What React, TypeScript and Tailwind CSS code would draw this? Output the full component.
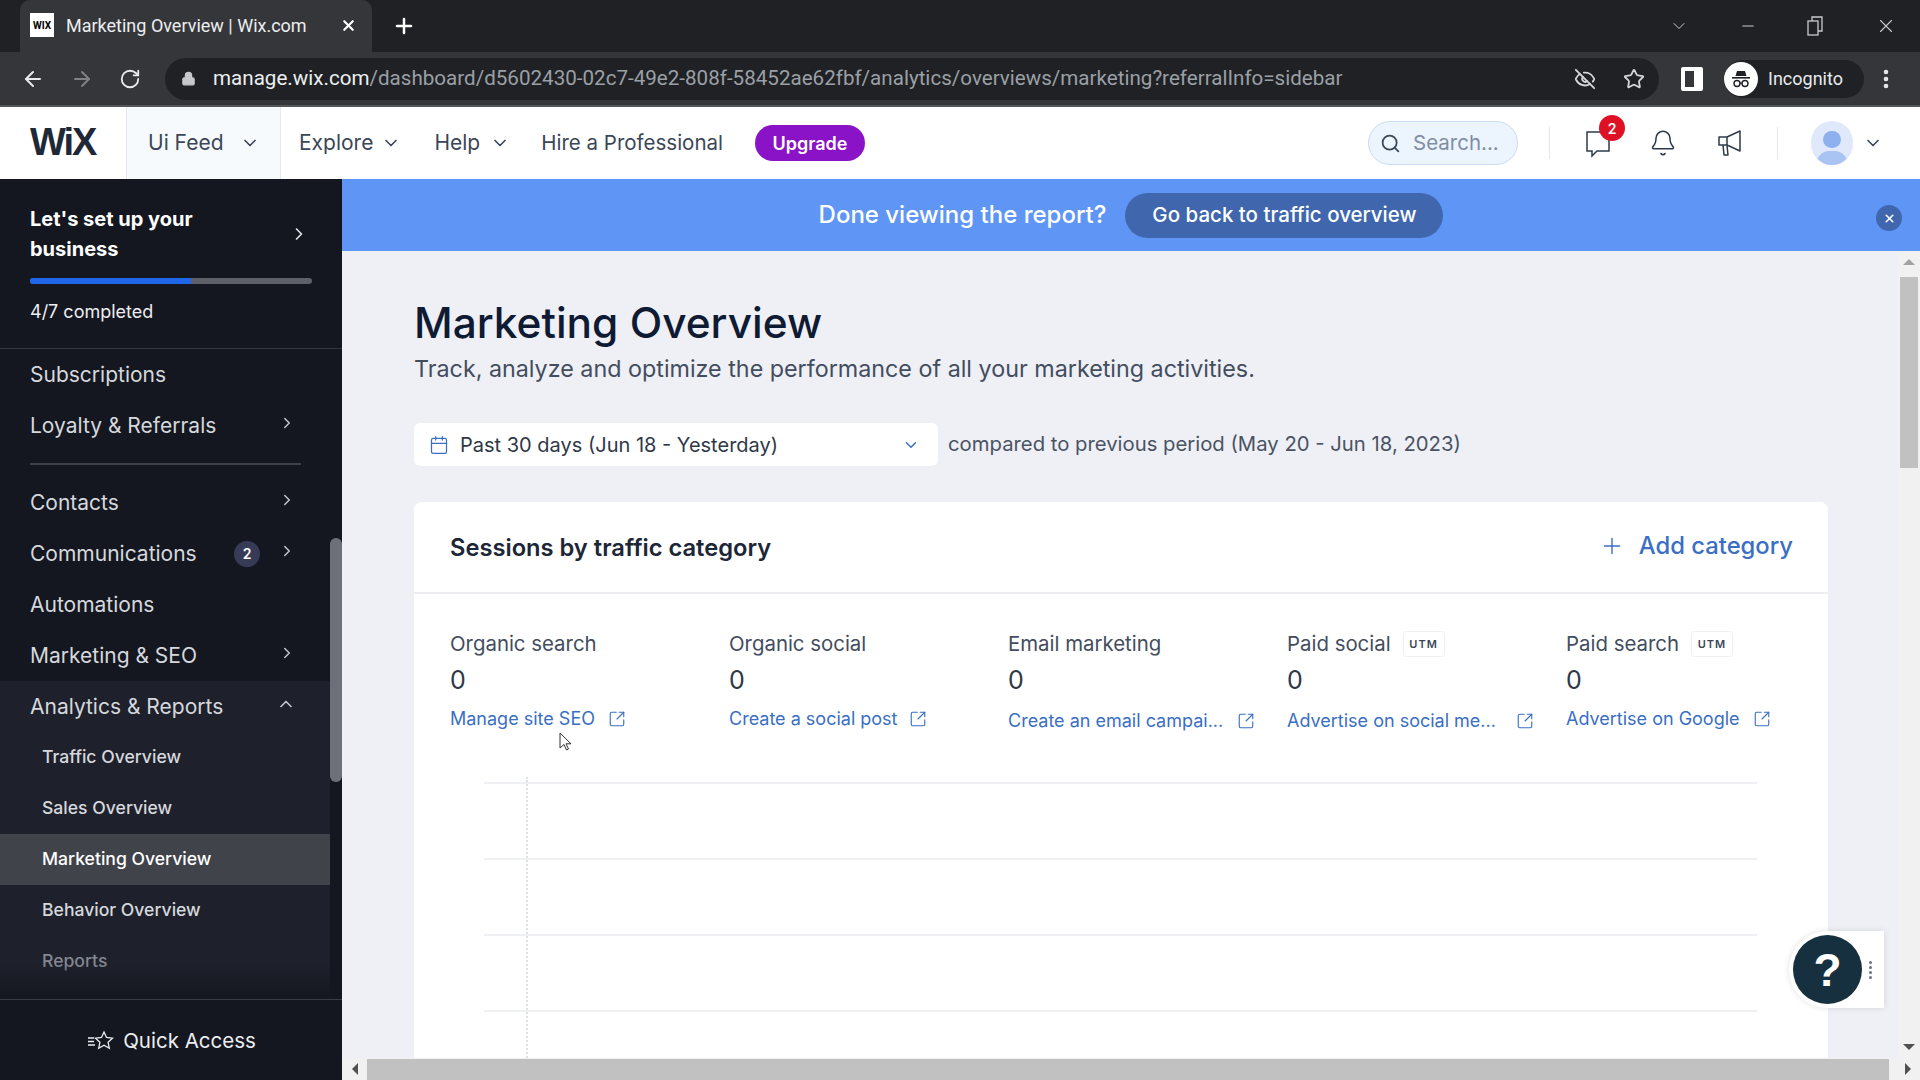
import {
  ArrowLeft,
  ArrowRight,
  Bell,
  Calendar,
  ChevronDown,
  ChevronRight,
  ChevronUp,
  EyeOff,
  Lock,
  Minus,
  MoreVertical,
  Plus,
  RotateCw,
  Search,
  SquareArrowOutUpRight,
  Star,
  X,
} from "lucide-react";

const sans = "font-['Inter','Noto_Sans',sans-serif]";

const traffic = [
  { label: "Organic search", link: "Manage site SEO", lift: "pt-[1px]", gap: "ml-[13px]" },
  { label: "Organic social", link: "Create a social post", lift: "pt-[1px]", gap: "ml-[11px]" },
  { label: "Email marketing", link: "Create an email campai...", lift: "pt-[3px]", gap: "ml-[14px]" },
  { label: "Paid social", link: "Advertise on social me...", utm: true, lift: "pt-[3px]", gap: "ml-[20px]" },
  { label: "Paid search", link: "Advertise on Google", utm: true, lift: "pt-[1px]", gap: "ml-[13px]" },
];

function NavRow({
  label,
  arrow,
  badge,
  sub,
  active,
  dim,
}: {
  label: string;
  arrow?: "right" | "up";
  badge?: string;
  sub?: boolean;
  active?: boolean;
  dim?: boolean;
}) {
  return (
    <div
      className={`flex h-[51px] shrink-0 items-center pr-[34px] ${sub ? "pl-[42px] text-[17.6px] font-medium" : "pl-[30px] text-[21px]"} ${active ? "bg-[#40434a] text-white" : dim ? "text-[#858892]" : "text-[#d6d8de]"}`}
    >
      <span className="flex-1 whitespace-nowrap">{label}</span>
      {badge && (
        <span className="mr-[18px] flex h-[26px] w-[26px] items-center justify-center rounded-full bg-[#383b56] text-[14px] font-semibold text-white">
          {badge}
        </span>
      )}
      {arrow === "right" && <ChevronRight size={18} className="-mt-[5px] text-[#c4c6cc]" />}
      {arrow === "up" && <ChevronUp size={20} className="-mt-[5px] text-[#c4c6cc]" />}
    </div>
  );
}

function BrowserChrome() {
  return (
    <>
      <div className="flex h-[52px] shrink-0 items-end bg-[#202124] pl-[20px] font-['Roboto',sans-serif]">
        <div className="flex h-[52px] w-[352px] items-center rounded-t-[10px] bg-[#35363a] pb-[2px] pl-[10px] pr-[15px] text-[18px] text-[#eceef0]">
          <div className="flex h-[24px] w-[24px] items-center justify-center bg-white text-[10px] font-bold text-black">
            WIX
          </div>
          <span className="ml-[12px] flex-1 whitespace-nowrap">Marketing Overview | Wix.com</span>
          <X size={17} strokeWidth={3} className="text-white" />
        </div>
        <div className="flex h-[52px] w-[64px] items-center justify-center">
          <Plus size={24} strokeWidth={2.5} className="text-white" />
        </div>
        <div className="flex h-[52px] flex-1 items-center justify-end text-[#c8cacd]">
          <ChevronDown size={20} strokeWidth={1.2} className="mr-[50px]" />
          <Minus size={18} strokeWidth={1.5} className="mr-[50px]" />
          <svg width="16" height="20" viewBox="0 0 16 20" fill="none" stroke="currentColor" strokeWidth="1.3" className="mr-[52px]">
            <rect x="1" y="5" width="10" height="14" />
            <path d="M5 5V1h10v14h-4" />
          </svg>
          <X size={22} strokeWidth={1.2} className="mr-[23px]" />
        </div>
      </div>
      <div className="flex h-[55px] shrink-0 items-center border-b-2 border-[#55565a] bg-[#35363a] font-['Roboto',sans-serif]">
        <div className="flex w-[165px] items-center justify-between pl-[21px] pr-[24px] text-[#e8eaed]">
          <ArrowLeft size={24} />
          <ArrowRight size={24} className="text-[#7f8185]" />
          <RotateCw size={22} />
        </div>
        <div className="flex h-[42px] w-[1494px] items-center rounded-full bg-[#202124] pl-[16px] pr-[13px] text-[20.6px]">
          <Lock size={15} fill="#c6c8cb" className="mr-[17px] text-[#c6c8cb]" />
          <span className="flex-1 whitespace-nowrap text-[#9aa0a6]">
            <span className="text-[#eceef0]">manage.wix.com</span>
            /dashboard/d5602430-02c7-49e2-808f-58452ae62fbf/analytics/overviews/marketing?referralInfo=sidebar
          </span>
          <EyeOff size={22} className="mr-[27px] text-[#d4d6d9]" />
          <Star size={22} className="mr-[1px] text-[#d4d6d9]" />
        </div>
        <div className="ml-[22px] h-[24px] w-[22px] rounded-[2px] border-[4px] border-r-[9px] border-white" />
        <div className="ml-[21px] flex h-[38px] w-[140px] items-center rounded-full bg-[#202124] text-[18px] text-[#e8eaed]">
          <div className="mr-[10px] flex h-[34px] w-[34px] items-center justify-center rounded-full bg-white">
            <svg width="24" height="24" viewBox="0 0 24 24" fill="#202124">
              <path d="M8 4h8l1.500 5h-11z" />
              <rect x="3" y="10" width="18" height="1.600" />
              <circle cx="8" cy="16.500" r="3" fill="none" stroke="#202124" strokeWidth="1.400" />
              <circle cx="16" cy="16.500" r="3" fill="none" stroke="#202124" strokeWidth="1.400" />
              <rect x="10.500" y="15.500" width="3" height="1.200" />
            </svg>
          </div>
          Incognito
        </div>
        <MoreVertical size={24} strokeWidth={2.6} className="ml-[10px] text-[#e8eaed]" />
      </div>
    </>
  );
}

function AppHeader() {
  return (
    <div className={`flex h-[72px] shrink-0 items-center bg-white text-[21px] text-[#3b4657] ${sans}`}>
      <div className="flex h-full w-[126px] items-center pb-[2px] pl-[30px] font-['Liberation_Sans',sans-serif] text-[38px] font-bold leading-none tracking-[-2px] text-[#1f2836]">
        WiX
      </div>
      <div className="flex h-full w-[155px] items-center border-x border-[#e6eaf0] bg-[#f7fafd] pl-[21px] pr-[20px]">
        <span className="flex-1">Ui Feed</span>
        <ChevronDown size={20} />
      </div>
      <span className="ml-[18px]">Explore</span>
      <ChevronDown size={20} className="ml-[8px]" />
      <span className="ml-[33px]">Help</span>
      <ChevronDown size={20} className="ml-[10px]" />
      <span className="ml-[31px] whitespace-nowrap text-[20.500px]">Hire a Professional</span>
      <div className="ml-[32px] flex h-[36px] w-[110px] items-center justify-center rounded-full bg-[#8a13c7] text-[18px] font-semibold text-white">
        Upgrade
      </div>
      <div className="ml-[503px] flex h-[44px] w-[150px] items-center rounded-full border border-[#c9dcf3] bg-[#ecf5fe] pl-[11px] text-[20.500px] text-[#7f8ea3]">
        <Search size={21} className="mr-[12px] text-[#3b4657]" />
        Search...
      </div>
      <div className="ml-[31px] h-[32px] w-px bg-[#e3e7ec]" />
      <div className="relative ml-[35px]">
        <svg width="26" height="30" viewBox="0 0 26 30" fill="none" stroke="#2e3a4b" strokeWidth="1.500" className="block">
          <path d="M2 4h22v19H12l-5 5v-5H2z" />
        </svg>
        <span className="absolute -right-[14px] -top-[13px] flex h-[26px] w-[26px] items-center justify-center rounded-full bg-[#df1125] text-[14px] font-semibold text-white">
          2
        </span>
      </div>
      <Bell size={28} strokeWidth={1.300} className="ml-[38px] text-[#2e3a4b]" />
      <svg width="28" height="30" viewBox="0 0 28 30" fill="none" stroke="#2e3a4b" strokeWidth="1.500" strokeLinejoin="round" className="ml-[39px]">
        <path d="M3 9h8l13-6v20l-13-6H3z" />
        <path d="M11 9v8M7 17l1 10h4l-1-9.500" />
      </svg>
      <div className="ml-[33px] h-[32px] w-px bg-[#e3e7ec]" />
      <div className="relative ml-[33px] h-[44px] w-[42px] overflow-hidden rounded-full bg-[#dfe9fb]">
        <div className="absolute left-[12px] top-[10px] h-[17px] w-[18px] rounded-full bg-[#8fb0ee]" />
        <div className="absolute left-[6px] top-[30px] h-[24px] w-[30px] rounded-full bg-[#a9c3f3]" />
      </div>
      <ChevronDown size={20} className="ml-[10px]" />
    </div>
  );
}

function Sidebar() {
  return (
    <aside className={`flex w-[342px] shrink-0 flex-col bg-[#14171f] ${sans}`}>
      <div className="h-[170px] shrink-0 border-b border-[#33363c] px-[30px] pt-[25px]">
        <div className="flex items-center justify-between">
          <div className="text-[20px] font-bold leading-[30px] text-white">
            Let's set up your
            <br />
            business
          </div>
          <ChevronRight size={20} className="mr-[3px] text-[#e2e3e6]" />
        </div>
        <div className="mt-[14px] h-[6px] w-[282px] overflow-hidden rounded-full bg-[#5e6069]">
          <div className="h-full w-[161px] bg-[#1f66ea]" />
        </div>
        <div className="mt-[14px] text-[18px] text-[#eceef2]">4/7 completed</div>
      </div>
      <div className="flex min-h-0 flex-1">
        <nav className="relative flex w-[330px] shrink-0 flex-col">
          <NavRow label="Subscriptions" />
          <NavRow label="Loyalty & Referrals" arrow="right" />
          <div className="mb-[6px] ml-[30px] mt-[12px] h-[2px] w-[271px] shrink-0 bg-[#3e4148]" />
          <div className="h-[6px] shrink-0" />
          <NavRow label="Contacts" arrow="right" />
          <NavRow label="Communications" arrow="right" badge="2" />
          <NavRow label="Automations" />
          <NavRow label="Marketing & SEO" arrow="right" />
          <div className="flex min-h-0 flex-1 flex-col overflow-hidden bg-[#1e212b]">
            <NavRow label="Analytics & Reports" arrow="up" />
            <NavRow label="Traffic Overview" sub />
            <NavRow label="Sales Overview" sub />
            <NavRow label="Marketing Overview" sub active />
            <NavRow label="Behavior Overview" sub />
            <NavRow label="Reports" sub dim />
          </div>
          <div className="absolute inset-x-0 bottom-0 h-[36px] bg-gradient-to-b from-transparent to-[#14171f]" />
        </nav>
        <div className="relative w-[12px]">
          <div className="absolute inset-x-0 top-[189px] h-[244px] rounded-full bg-[#6d7078]" />
        </div>
      </div>
      <div className="flex h-[81px] shrink-0 items-center justify-center border-t border-[#3a3d44] bg-[#14171f] pl-[2px] pt-[2px] text-[20.500px] text-[#eceef2]">
        <svg width="26" height="22" viewBox="0 0 26 22" fill="none" stroke="currentColor" strokeWidth="1.300" className="mr-[9px]">
          <path d="M16 2l2.500 5.500 6 .7-4.400 4.100 1.200 6L16 15.300l-5.300 3 1.200-6L7.500 8.200l6-.7z" />
          <path d="M0 8h6M0 11.500h6M0 15h7" />
        </svg>
        Quick Access
      </div>
    </aside>
  );
}

function TrafficColumn({
  label,
  link,
  utm,
  lift,
  gap,
}: {
  label: string;
  link: string;
  utm?: boolean;
  lift: string;
  gap: string;
}) {
  return (
    <div className="w-[279px] shrink-0">
      <div className="flex h-[26px] items-center text-[20.400px] text-[#434d5e]">
        <span className="whitespace-nowrap">{label}</span>
        {utm && (
          <span className="ml-[12px] flex h-[26px] w-[42px] items-center justify-center rounded-[3px] border border-[#eef0f4] text-[11px] font-semibold tracking-[1px] text-[#3d4656]">
            UTM
          </span>
        )}
      </div>
      <div className="mt-[7px] h-[32px] text-[25px] leading-[32px] text-[#2f3847]">0</div>
      <div className={`${lift} mt-[8px] flex items-center text-[18px] text-[#3a6fc4]`}>
        <span className="whitespace-nowrap">{link}</span>
        <SquareArrowOutUpRight size={18} strokeWidth={1.500} className={gap} />
      </div>
    </div>
  );
}

function Main() {
  return (
    <main className={`flex min-w-0 flex-1 flex-col bg-[#eef0f6] ${sans}`}>
      <div className="flex h-[72px] shrink-0 items-center justify-center bg-[#5f96f6]">
        <span className="text-[24px] font-medium text-white">Done viewing the report?</span>
        <div className="ml-[19px] flex h-[45px] w-[318px] items-center justify-center rounded-full bg-[#4067ae] text-[20.500px] font-medium text-white">
          Go back to traffic overview
        </div>
        <div className="absolute right-[18px] top-[205px] flex h-[26px] w-[26px] items-center justify-center rounded-full bg-[#4067ae]">
          <X size={13} strokeWidth={3} className="text-white" />
        </div>
      </div>
      <div className="flex min-h-0 flex-1">
        <div className="min-w-0 flex-1 overflow-hidden pl-[72px] pt-[43px]">
          <h1 className="text-[42.400px] font-medium leading-[58px] text-[#0f1a33]">Marketing Overview</h1>
          <p className="mt-[2px] whitespace-nowrap text-[23.300px] leading-[30px] text-[#434d5e]">
            Track, analyze and optimize the performance of all your marketing activities.
          </p>
          <div className="mt-[39px] flex items-center">
            <div className="flex h-[43px] w-[524px] items-center rounded-[6px] bg-white pl-[15px] pr-[18px] text-[20px] text-[#2f3847]">
              <Calendar size={20} strokeWidth={1.500} className="mr-[11px] text-[#3a6fc4]" />
              <span className="flex-1 whitespace-nowrap">Past 30 days (Jun 18 - Yesterday)</span>
              <ChevronDown size={18} className="text-[#3a6fc4]" />
            </div>
            <span className="ml-[10px] whitespace-nowrap text-[20.300px] text-[#4a5364]">
              compared to previous period (May 20 - Jun 18, 2023)
            </span>
          </div>
          <section className="mt-[36px] w-[1414px] rounded-t-[8px] bg-white">
            <div className="flex h-[92px] items-center justify-between border-b-2 border-[#eceef2] pl-[36px] pr-[35px]">
              <h2 className="pt-[2px] text-[23.700px] font-semibold text-[#1d2636]">Sessions by traffic category</h2>
              <div className="-mt-[3px] flex items-center text-[23.800px] font-medium text-[#3a6fc4]">
                <Plus size={26} strokeWidth={1.300} className="mr-[14px]" />
                Add category
              </div>
            </div>
            <div className="flex pl-[36px] pt-[37px]">
              {traffic.map((t) => (
                <TrafficColumn key={t.label} label={t.label} link={t.link} utm={t.utm} lift={t.lift} gap={t.gap} />
              ))}
            </div>
            <div className="relative ml-[70px] mt-[48px] flex h-[300px] w-[1273px] flex-col gap-[74px]">
              {[0, 1, 2, 3].map((i) => (
                <div key={i} className="h-[2px] shrink-0 bg-[#eff0f3]" />
              ))}
              <div className="absolute bottom-0 left-[42px] top-[-5px] border-l-2 border-dotted border-[#dfe1e6]" />
            </div>
          </section>
        </div>
        <div className="flex w-[22px] shrink-0 flex-col items-center justify-between bg-[#f1f1f1] py-[8px]">
          <div className="h-0 w-0 border-x-[6px] border-b-[6px] border-x-transparent border-b-[#a3a3a3]" />
          <div className="absolute right-[2px] top-[277px] h-[191px] w-[18px] bg-[#c1c1c1]" />
          <div className="h-0 w-0 border-x-[6px] border-t-[6px] border-x-transparent border-t-[#505050]" />
        </div>
      </div>
      <div className="flex h-[22px] shrink-0 items-center bg-[#f1f1f1]">
        <div className="ml-[10px] h-0 w-0 border-y-[6px] border-r-[6px] border-y-transparent border-r-[#505050]" />
        <div className="ml-[9px] h-[21px] w-[1522px] bg-[#c1c1c1]" />
        <div className="ml-[16px] h-0 w-0 border-y-[6px] border-l-[6px] border-y-transparent border-l-[#505050]" />
      </div>
    </main>
  );
}

export default function App() {
  return (
    <div className="relative flex h-[1080px] w-[1920px] flex-col overflow-hidden">
      <BrowserChrome />
      <AppHeader />
      <div className="flex min-h-0 flex-1">
        <Sidebar />
        <Main />
      </div>

      {/* help widget floats over the page */}
      <div className="absolute left-[1789px] top-[931px] flex h-[77px] w-[95px] items-center rounded-l-full rounded-r-[3px] bg-white pl-[4px] shadow-[0_0_6px_rgba(0,0,0,0.12)]">
        <div className="flex h-[69px] w-[69px] items-center justify-center rounded-full bg-[#17303f] font-['Liberation_Sans',sans-serif] text-[46px] font-bold leading-none text-white">
          ?
        </div>
        <div className="ml-[7px] flex flex-col gap-[2px]">
          {[0, 1, 2, 3].map((i) => (
            <div key={i} className="h-[3px] w-[3px] rounded-full bg-[#6c7480]" />
          ))}
        </div>
      </div>

      {/* mouse pointer */}
      <svg width="14" height="20" viewBox="0 0 14 20" className="absolute left-[559px] top-[732px]" fill="white" stroke="#333" strokeWidth="1">
        <path d="M1 1v15l4-3.500 2.500 5.500 2-1-2.500-5.200H12z" />
      </svg>
    </div>
  );
}
